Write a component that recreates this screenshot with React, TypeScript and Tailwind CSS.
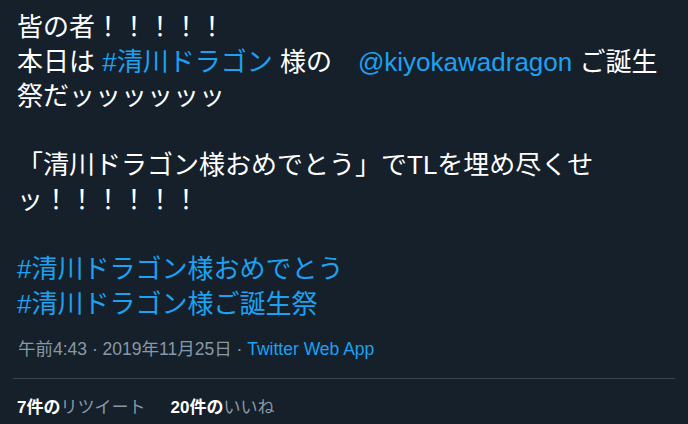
import React from 'react';

export default function App() {
  return (
    <div className="w-[688px] h-[424px] overflow-hidden bg-[#15202b] text-white font-['Liberation_Sans','Noto_Sans_CJK_JP',sans-serif]">
      {/* Tweet body */}
      <div className="pl-[17px] pt-[10px] text-[26px] leading-[34.6px] whitespace-pre-wrap">
        <div>皆の者！！！！！</div>
        <div>
          本日は <span className="text-[#1da1f2]">#清川ドラゴン</span> 様の　<span className="text-[#1da1f2]">@kiyokawadragon</span> ご誕生
        </div>
        <div>祭だッッッッッッ</div>
        <div>&nbsp;</div>
        <div>「清川ドラゴン様おめでとう」でTLを埋め尽くせ</div>
        <div>ッ！！！！！！</div>
        <div>&nbsp;</div>
        <div className="text-[#1da1f2]">#清川ドラゴン様おめでとう</div>
        <div className="text-[#1da1f2]">#清川ドラゴン様ご誕生祭</div>
      </div>

      {/* Meta */}
      <div className="pl-[18px] mt-[18px] text-[17.5px] leading-[20px] text-[#8899a6]">
        午前4:43 · 2019年11月25日 · <span className="text-[#1da1f2]">Twitter Web App</span>
      </div>

      <div className="mx-[13px] mt-[19px] h-px bg-[#38444d]" />

      {/* Stats */}
      <div className="pl-[17px] pt-[19px] flex gap-[25px] text-[17px] leading-[20px]">
        <span>
          <span className="font-bold text-white">7件の</span>
          <span className="text-[#8899a6]">リツイート</span>
        </span>
        <span>
          <span className="font-bold text-white">20件の</span>
          <span className="text-[#8899a6]">いいね</span>
        </span>
      </div>
    </div>
  );
}
